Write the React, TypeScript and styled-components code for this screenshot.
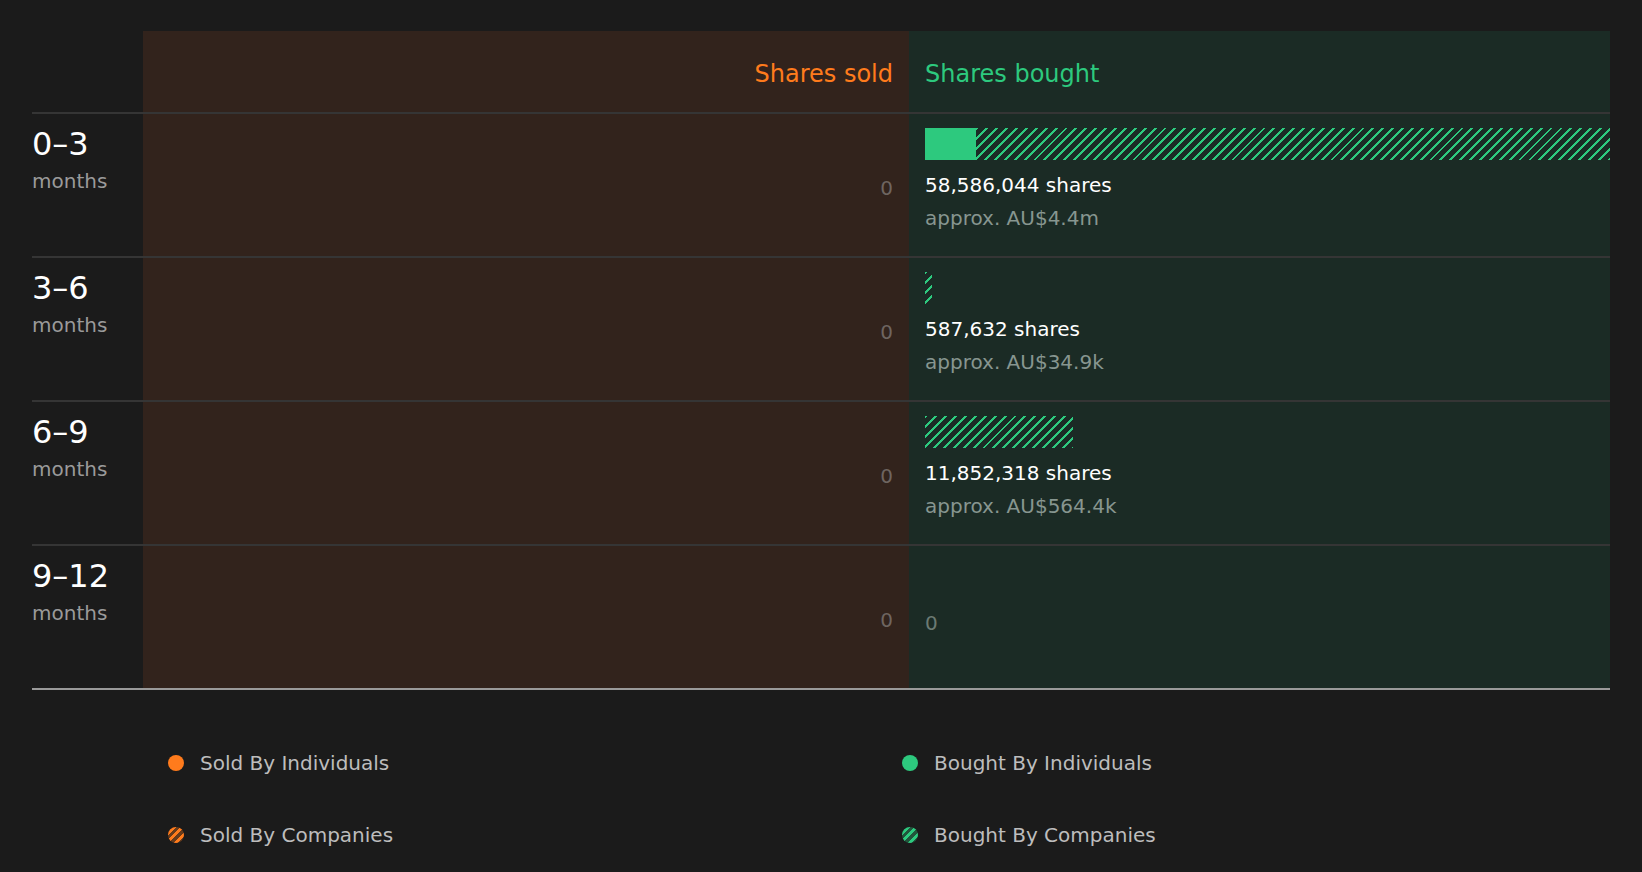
import React from 'react';
import styled, { createGlobalStyle } from 'styled-components';

const GREEN = '#2dc97e';
const ORANGE = '#ff7b1c';

const Global = createGlobalStyle`
  body {
    margin: 0;
    background: #1b1b1b;
    font-family: 'DejaVu Sans', 'Liberation Sans', sans-serif;
  }
`;

const Page = styled.div`
  padding: 31px 32px 0 32px;
  width: 1578px;
`;

const Table = styled.div`
  display: grid;
  grid-template-columns: 111px 766px 701px;
  border-bottom: 2px solid #9a9a9a;
`;

const Cell = styled.div<{ $tone?: 'sold' | 'bought'; $line?: boolean }>`
  background: ${p => (p.$tone === 'sold' ? '#32231c' : p.$tone === 'bought' ? '#1b2b25' : 'transparent')};
  border-top: ${p => (p.$line ? '2px solid #353535' : 'none')};
  box-sizing: border-box;
`;

const HeaderCell = styled(Cell)<{ $align: 'left' | 'right' }>`
  height: 81px;
  display: flex;
  align-items: center;
  justify-content: ${p => (p.$align === 'right' ? 'flex-end' : 'flex-start')};
  padding: 4px 16px 0;
  font-size: 24px;
  color: ${p => (p.$tone === 'sold' ? ORANGE : GREEN)};
`;

const LabelCell = styled(Cell)`
  height: 144px;
  padding-top: 10px;
`;

const Range = styled.div`
  color: #fff;
  font-size: 32px;
  line-height: 40px;
`;

const Months = styled.div`
  color: #9a9a9a;
  font-size: 20px;
  line-height: 30px;
  margin-top: 2px;
`;

const SoldCell = styled(Cell)`
  height: 144px;
  display: flex;
  justify-content: flex-end;
  padding: 62px 16px 0;
  font-size: 20px;
  color: #6e6560;
`;

const BoughtCell = styled(Cell)`
  height: 144px;
  padding: 14px 0 0 16px;
  overflow: hidden;
`;

const Bar = styled.div`
  display: flex;
  height: 32px;
  margin-bottom: 10px;
`;

const Solid = styled.div`
  background: ${GREEN};
  height: 100%;
`;

const Hatched = styled.div`
  height: 100%;
  background: repeating-linear-gradient(135deg, ${GREEN} 0 2px, transparent 2px 7px);
`;

const Shares = styled.div<{ $zero?: boolean }>`
  color: ${p => (p.$zero ? '#6b7a73' : '#fff')};
  font-size: 20px;
  line-height: 30px;
`;

const Approx = styled.div`
  color: #879690;
  font-size: 20px;
  line-height: 36px;
`;

const Legend = styled.div`
  display: grid;
  grid-template-columns: 734px 1fr;
  row-gap: 38px;
  padding: 56px 0 0 136px;
`;

const LegendItem = styled.div`
  display: flex;
  align-items: center;
  gap: 16px;
  color: #bdbdbd;
  font-size: 20px;
  line-height: 34px;
`;

const Dot = styled.span<{ $color: string; $hatch?: boolean }>`
  width: 16px;
  height: 16px;
  border-radius: 50%;
  background: ${p =>
    p.$hatch
      ? `repeating-linear-gradient(135deg, ${p.$color}55 0 3px, ${p.$color} 3px 6px)`
      : p.$color};
`;

const rows = [
  { range: '0–3', solid: 51, hatch: 634, shares: '58,586,044 shares', approx: 'approx. AU$4.4m' },
  { range: '3–6', solid: 0, hatch: 7, shares: '587,632 shares', approx: 'approx. AU$34.9k' },
  { range: '6–9', solid: 0, hatch: 148, shares: '11,852,318 shares', approx: 'approx. AU$564.4k' },
  { range: '9–12', solid: 0, hatch: 0, shares: '', approx: '' },
];

export default function App() {
  return (
    <Page>
      <Global />
      <Table>
        <Cell />
        <HeaderCell $tone="sold" $align="right">Shares sold</HeaderCell>
        <HeaderCell $tone="bought" $align="left">Shares bought</HeaderCell>
        {rows.map(r => (
          <React.Fragment key={r.range}>
            <LabelCell $line>
              <Range>{r.range}</Range>
              <Months>months</Months>
            </LabelCell>
            <SoldCell $tone="sold" $line>0</SoldCell>
            <BoughtCell $tone="bought" $line>
              {r.shares ? (
                <>
                  <Bar>
                    {r.solid > 0 && <Solid style={{ width: r.solid }} />}
                    <Hatched style={{ width: r.hatch }} />
                  </Bar>
                  <Shares>{r.shares}</Shares>
                  <Approx>{r.approx}</Approx>
                </>
              ) : (
                <Shares $zero style={{ marginTop: 48 }}>0</Shares>
              )}
            </BoughtCell>
          </React.Fragment>
        ))}
      </Table>
      <Legend>
        <LegendItem><Dot $color={ORANGE} />Sold By Individuals</LegendItem>
        <LegendItem><Dot $color={GREEN} />Bought By Individuals</LegendItem>
        <LegendItem><Dot $color={ORANGE} $hatch />Sold By Companies</LegendItem>
        <LegendItem><Dot $color={GREEN} $hatch />Bought By Companies</LegendItem>
      </Legend>
    </Page>
  );
}
